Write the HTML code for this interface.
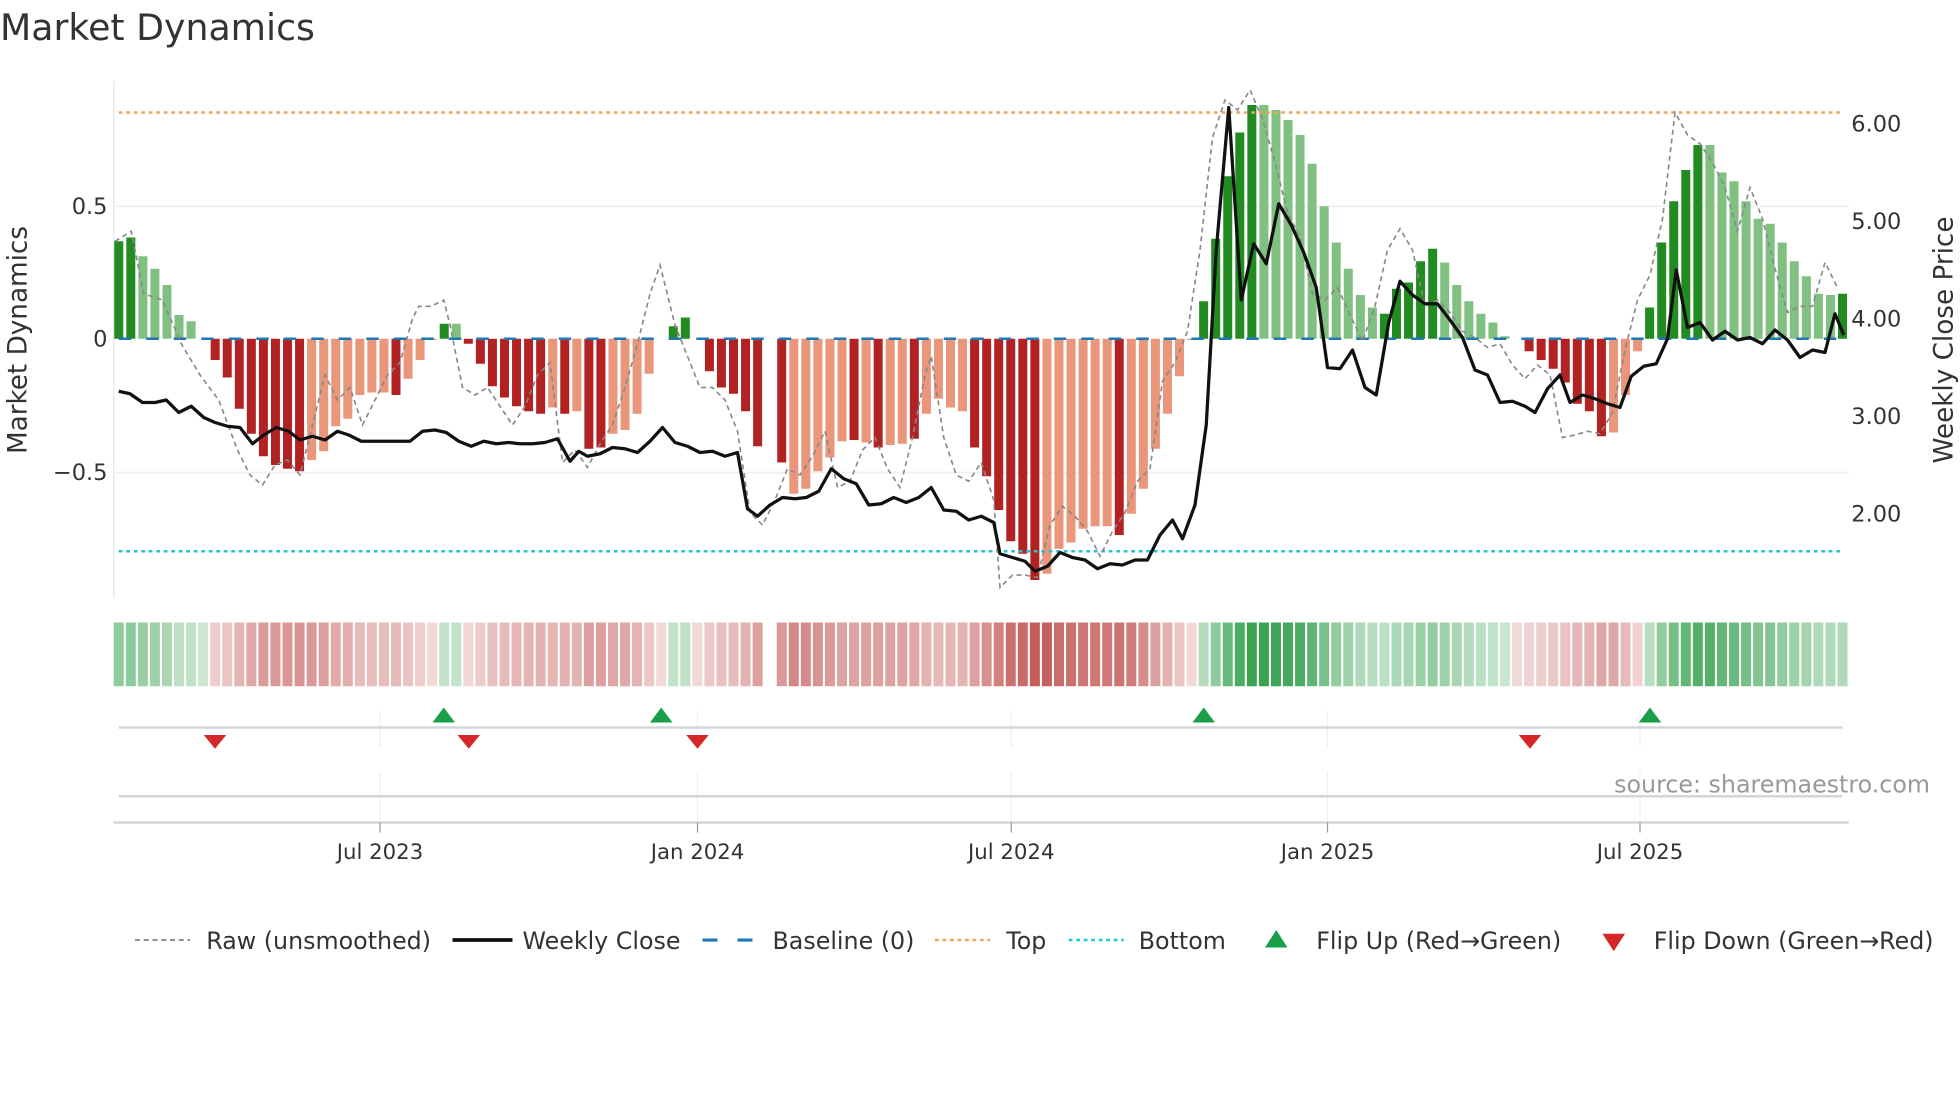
<!DOCTYPE html>
<html><head><meta charset="utf-8"><style>
html,body{margin:0;padding:0;background:#fff;width:1960px;height:1102px;overflow:hidden}
svg{display:block;font-family:"DejaVu Sans","Liberation Sans",sans-serif}
</style></head><body>
<svg id="s" width="1960" height="1102" viewBox="0 0 1568 881.6" xmlns="http://www.w3.org/2000/svg">
<rect width="1568" height="882" fill="#fff"/>
<text x="0" y="32" font-size="29" fill="#333">Market Dynamics</text>
<line x1="91" y1="65" x2="91" y2="478" stroke="#e6e6e6" stroke-width="1"/>
<line x1="91" y1="165" x2="1479" y2="165" stroke="#eef0f3" stroke-width="1.5"/>
<line x1="91" y1="378" x2="1479" y2="378" stroke="#eef0f3" stroke-width="1.5"/>
<g id="bars"></g>
<line x1="95" y1="90" x2="1474" y2="90" stroke="#f2a35e" stroke-width="2" stroke-dasharray="3,3"/>
<line x1="95" y1="441" x2="1474" y2="441" stroke="#22c4d8" stroke-width="2" stroke-dasharray="3,3"/>
<line x1="95" y1="271" x2="1474" y2="271" stroke="#1f77b4" stroke-width="2" stroke-dasharray="10,12"/>
<polyline id="raw" fill="none" stroke="#888" stroke-width="1.3" stroke-dasharray="4,3"/>
<polyline id="close" fill="none" stroke="#111" stroke-width="2.6" stroke-linejoin="round"/>
<g font-size="18" fill="#333" text-anchor="end">
<text x="86" y="171">0.5</text><text x="86" y="277">0</text><text x="86" y="384">−0.5</text>
</g>
<g font-size="18" fill="#333">
<text x="1481" y="105">6.00</text><text x="1481" y="183">5.00</text><text x="1481" y="261">4.00</text><text x="1481" y="339">3.00</text><text x="1481" y="417">2.00</text>
</g>
<text transform="translate(21,272) rotate(-90)" font-size="21" fill="#333" text-anchor="middle">Market Dynamics</text>
<text transform="translate(1562,272) rotate(-90)" font-size="21" fill="#333" text-anchor="middle">Weekly Close Price</text>
<g id="strip"></g>
<g stroke="#eef1f4" stroke-width="1">
<line x1="304" y1="568" x2="304" y2="598"/><line x1="558" y1="568" x2="558" y2="598"/><line x1="809" y1="568" x2="809" y2="598"/><line x1="1062" y1="568" x2="1062" y2="598"/><line x1="1312" y1="568" x2="1312" y2="598"/>
<line x1="304" y1="617" x2="304" y2="658"/><line x1="558" y1="617" x2="558" y2="658"/><line x1="809" y1="617" x2="809" y2="658"/><line x1="1062" y1="617" x2="1062" y2="658"/><line x1="1312" y1="617" x2="1312" y2="658"/>
</g>
<line x1="95" y1="582" x2="1474" y2="582" stroke="#d3d6d8" stroke-width="2"/>
<line x1="95" y1="637" x2="1474" y2="637" stroke="#d3d6d8" stroke-width="2"/>
<line x1="91" y1="658" x2="1479" y2="658" stroke="#d3d6d8" stroke-width="2"/>
<g stroke="#999" stroke-width="1"><line x1="304" y1="658" x2="304" y2="666"/><line x1="558" y1="658" x2="558" y2="666"/><line x1="809" y1="658" x2="809" y2="666"/><line x1="1062" y1="658" x2="1062" y2="666"/><line x1="1312" y1="658" x2="1312" y2="666"/></g>
<g id="flips"></g>
<g font-size="17" fill="#333" text-anchor="middle">
<text x="304" y="687">Jul 2023</text><text x="558" y="687">Jan 2024</text><text x="809" y="687">Jul 2024</text><text x="1062" y="687">Jan 2025</text><text x="1312" y="687">Jul 2025</text>
</g>
<text x="1544" y="634" font-size="19" fill="#999" text-anchor="end">source: sharemaestro.com</text>
<g font-size="19" fill="#333">
<line x1="108" y1="752" x2="152" y2="752" stroke="#888" stroke-width="1.5" stroke-dasharray="4,3"/>
<text x="165" y="759">Raw (unsmoothed)</text>
<line x1="362" y1="752" x2="410" y2="752" stroke="#111" stroke-width="3"/>
<text x="418" y="759">Weekly Close</text>
<line x1="562" y1="752" x2="606" y2="752" stroke="#1f77b4" stroke-width="2.5" stroke-dasharray="12,16"/>
<text x="618" y="759">Baseline (0)</text>
<line x1="748" y1="752" x2="792" y2="752" stroke="#f2a35e" stroke-width="2" stroke-dasharray="3,3"/>
<text x="805" y="759">Top</text>
<line x1="855" y1="752" x2="899" y2="752" stroke="#22c4d8" stroke-width="2" stroke-dasharray="3,3"/>
<text x="911" y="759">Bottom</text>
<polygon points="1021,744 1030,758 1012,758" fill="#1a9e4a"/>
<text x="1053" y="759">Flip Up (Red→Green)</text>
<polygon points="1282,747 1300,747 1291,761" fill="#d62728"/>
<text x="1323" y="759">Flip Down (Green→Red)</text>
</g>
</svg>
<script>
var NS="http://www.w3.org/2000/svg";
function el(t,a,p){var e=document.createElementNS(NS,t);for(var k in a)e.setAttribute(k,a[k]);p.appendChild(e);return e;}
var B="G78 G81 g66 g56 g43 g19 g14 n0 R-17 R-31 R-56 R-76 R-94 R-101 R-104 R-106 r-97 r-90 r-70 r-64 r-45 r-43 r-43 R-45 r-32 r-17 r-1 G12 g12 R-4 R-20 R-38 R-47 R-54 R-58 R-60 r-55 R-60 r-58 R-88 R-87 r-76 r-73 r-60 r-28 n0 G10 G17 n0 R-26 R-39 R-44 R-58 R-86 x0 R-99 r-124 r-120 r-106 r-95 r-82 R-81 r-83 R-87 r-85 r-84 R-80 r-60 r-48 r-55 r-58 R-87 R-110 R-137 R-162 R-172 R-193 r-188 r-168 r-163 r-152 r-150 r-150 R-157 r-140 r-120 r-88 r-60 r-30 r-1 G30 G80 G130 G165 G187 g187 g183 g175 g163 g140 g106 g77 g56 g35 g25 G20 G40 G45 G62 G72 g61 g43 g30 g20 g13 g2 n0 R-10 R-17 R-24 R-35 R-52 R-58 R-78 r-75 r-45 r-10 G25 G77 G110 G135 G155 g155 g133 g126 g110 g96 g92 g77 g62 g50 g36 g35 G36".split(" ");
var C={G:"#228b22",g:"#80c080",R:"#b22222",r:"#e9967a"};
var bars=document.getElementById("bars"),strip=document.getElementById("strip");
var step=(1474-95)/(B.length-1);
B.forEach(function(s,i){
 var t=s[0],v=parseFloat(s.slice(1)),x=95+step*i;
 if(t=="x")return;
 if(v!=0){var y=v>0?271-v:271,h=Math.abs(v);el("rect",{x:x-3.6,y:y,width:7.2,height:h,fill:C[t]},bars);}
 var a=Math.min(1,Math.abs(v)/190);var col,op;
 if(v>0||(t=="n"&&i<10)||t=="G"||t=="g"){col="#2e9e48";op=0.25+0.7*a;}else{col="#c0504d";op=0.22+0.7*a;}
 el("rect",{x:x-4,y:498,width:8,height:51,fill:col,"fill-opacity":op.toFixed(2)},strip);
});
var close="95,313 104,315 114,322 124,322 133,320 143,330 153,325 163,334 172,338 182,341 192,342 202,355 211,348 221,342 231,345 240,352 250,349 260,352 270,345 279,348 289,353 299,353 309,353 318,353 328,353 338,345 348,344 357,346 367,353 377,357 387,353 397,355 407,354 416,355 426,355 436,354 446,351 456,369 463,361 470,365 480,363 490,358 500,359 510,362 520,353 530,342 540,354 550,357 560,362 570,361 580,365 590,362 598,407 606,413 616,404 626,398 636,399 645,398 655,393 665,375 675,383 685,387 695,404 705,403 715,398 725,402 735,398 745,390 755,408 765,409 775,416 785,413 795,418 800,443 810,446 820,449 828,457 838,453 848,442 858,446 868,448 878,455 888,451 898,452 908,448 918,448 928,428 938,416 946,431 956,404 965,340 973,200 983,86 993,240 1003,195 1013,211 1023,163 1033,180 1043,202 1053,230 1062,294 1072,295 1082,280 1092,310 1101,316 1111,258 1120,225 1130,236 1140,243 1150,243 1160,256 1170,270 1180,296 1190,300 1200,322 1210,321 1220,325 1228,330 1238,311 1248,300 1256,322 1266,316 1276,319 1286,323 1296,326 1305,301 1315,293 1325,291 1334,271 1341,216 1350,262 1360,258 1370,272 1380,265 1390,272 1400,270 1410,275 1420,264 1430,272 1440,286 1450,280 1460,282 1468,251 1475,268";
document.getElementById("close").setAttribute("points",close);
var raw="92,193 105,185 115,235 130,240 145,275 160,300 175,320 190,360 200,380 210,388 220,372 230,368 240,380 250,340 260,300 270,320 280,310 290,340 300,320 310,300 320,290 330,255 335,245 345,245 355,240 360,260 370,310 380,316 390,310 400,325 410,340 420,325 430,300 440,290 450,370 460,360 470,374 480,355 490,340 500,310 510,275 520,235 528,212 540,260 550,285 560,310 570,310 580,320 590,345 600,410 610,420 620,400 630,375 640,380 650,365 660,345 670,390 680,385 690,360 700,350 710,375 720,390 730,350 740,300 745,285 755,350 765,380 775,385 785,370 795,400 800,470 810,460 820,460 830,462 840,420 850,405 860,413 870,425 880,445 890,425 900,410 910,385 920,375 930,305 940,290 950,265 960,200 970,110 980,80 990,88 1000,72 1010,95 1020,130 1030,170 1040,190 1050,235 1060,240 1070,230 1080,252 1090,273 1100,245 1110,200 1120,183 1130,200 1140,245 1150,240 1160,250 1170,265 1180,270 1190,278 1200,275 1210,292 1220,303 1230,292 1240,300 1250,350 1260,348 1270,345 1280,347 1290,330 1300,280 1310,240 1320,220 1330,175 1340,90 1350,108 1360,115 1370,130 1380,150 1390,185 1400,150 1410,175 1420,215 1430,250 1440,245 1450,245 1460,210 1470,230";
document.getElementById("raw").setAttribute("points",raw);
var f=document.getElementById("flips");
[355,529,963,1320].forEach(function(x){el("polygon",{points:(x)+",566 "+(x+9)+",578 "+(x-9)+",578",fill:"#1a9e4a"},f);});
[172,375,558,1224].forEach(function(x){el("polygon",{points:(x-9)+",588 "+(x+9)+",588 "+x+",599",fill:"#d62728"},f);});
</script>
</body></html>
